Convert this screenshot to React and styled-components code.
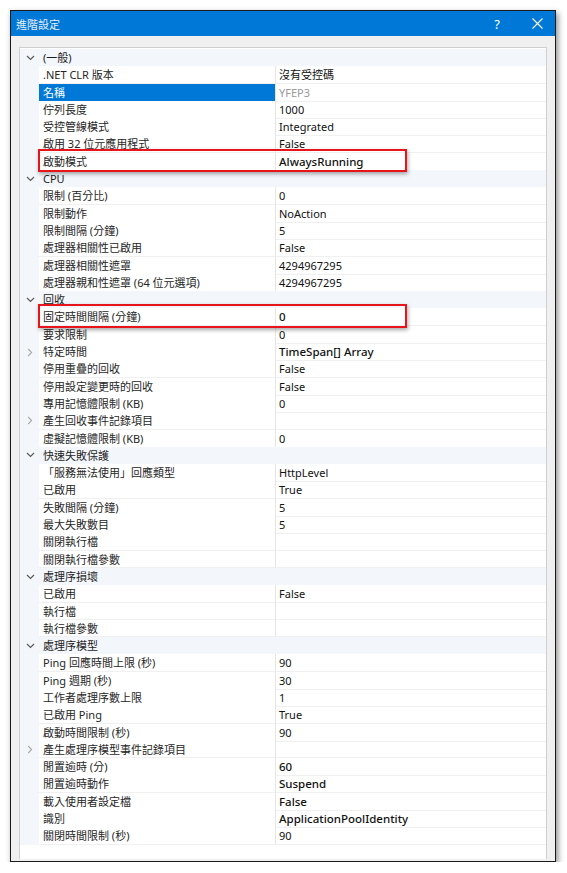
import React from "react";
import styled, { createGlobalStyle } from "styled-components";

const rows = [
  { cat: "(一般)" },
  { name: ".NET CLR 版本", value: "沒有受控碼" },
  { name: "名稱", value: "YFEP3", selected: true },
  { name: "佇列長度", value: "1000" },
  { name: "受控管線模式", value: "Integrated" },
  { name: "啟用 32 位元應用程式", value: "False" },
  { name: "啟動模式", value: "AlwaysRunning", bold: true, mark: true },
  { cat: "CPU" },
  { name: "限制 (百分比)", value: "0" },
  { name: "限制動作", value: "NoAction" },
  { name: "限制間隔 (分鐘)", value: "5" },
  { name: "處理器相關性已啟用", value: "False" },
  { name: "處理器相關性遮罩", value: "4294967295" },
  { name: "處理器親和性遮罩 (64 位元選項)", value: "4294967295" },
  { cat: "回收" },
  { name: "固定時間間隔 (分鐘)", value: "0", bold: true, mark: true },
  { name: "要求限制", value: "0" },
  { name: "特定時間", value: "TimeSpan[] Array", bold: true, expand: true },
  { name: "停用重疊的回收", value: "False" },
  { name: "停用設定變更時的回收", value: "False" },
  { name: "專用記憶體限制 (KB)", value: "0" },
  { name: "產生回收事件記錄項目", value: "", expand: true },
  { name: "虛擬記憶體限制 (KB)", value: "0" },
  { cat: "快速失敗保護" },
  { name: "「服務無法使用」回應類型", value: "HttpLevel" },
  { name: "已啟用", value: "True" },
  { name: "失敗間隔 (分鐘)", value: "5" },
  { name: "最大失敗數目", value: "5" },
  { name: "關閉執行檔", value: "" },
  { name: "關閉執行檔參數", value: "" },
  { cat: "處理序損壞" },
  { name: "已啟用", value: "False" },
  { name: "執行檔", value: "" },
  { name: "執行檔參數", value: "" },
  { cat: "處理序模型" },
  { name: "Ping 回應時間上限 (秒)", value: "90" },
  { name: "Ping 週期 (秒)", value: "30" },
  { name: "工作者處理序數上限", value: "1" },
  { name: "已啟用 Ping", value: "True" },
  { name: "啟動時間限制 (秒)", value: "90" },
  { name: "產生處理序模型事件記錄項目", value: "", expand: true },
  { name: "閒置逾時 (分)", value: "60", bold: true },
  { name: "閒置逾時動作", value: "Suspend", bold: true },
  { name: "載入使用者設定檔", value: "False", bold: true },
  { name: "識別", value: "ApplicationPoolIdentity", bold: true },
  { name: "關閉時間限制 (秒)", value: "90" },
];

const App = () => {
  return (
    <>
      <GlobalStyle />
      <Window>
        <TitleBar>
          <Title>進階設定</Title>
          <TitleButtons>
            <Help>?</Help>
            <Close>
              <svg width="11" height="11" viewBox="0 0 11 11">
                <path d="M0.5 0.5 L10.5 10.5 M10.5 0.5 L0.5 10.5" stroke="#fff" strokeWidth="1.1" />
              </svg>
            </Close>
          </TitleButtons>
        </TitleBar>
        <Content>
          <Grid>
            {rows.map((r, i) =>
              r.cat ? (
                <CategoryRow key={i}>
                  <Gutter>
                    <svg width="9" height="6" viewBox="0 0 9 6">
                      <path d="M1 1 L4.5 4.5 L8 1" fill="none" stroke="#5a5a5a" strokeWidth="1.2" />
                    </svg>
                  </Gutter>
                  <CatLabel>{r.cat}</CatLabel>
                </CategoryRow>
              ) : (
                <Row key={i}>
                  <Gutter>
                    {r.expand && (
                      <svg width="6" height="9" viewBox="0 0 6 9">
                        <path d="M1.2 1 L4.6 4.5 L1.2 8" fill="none" stroke="#a8a8a8" strokeWidth="1.1" />
                      </svg>
                    )}
                  </Gutter>
                  <NameCell $selected={r.selected}>{r.name}</NameCell>
                  <ValueCell $bold={r.bold} $muted={r.selected}>
                    {r.value}
                  </ValueCell>
                  {r.mark && <Highlight />}
                </Row>
              )
            )}
          </Grid>
        </Content>
      </Window>
    </>
  );
};

export default App;

const GlobalStyle = createGlobalStyle`
  body {
    margin: 0;
    background: #ffffff;
    font-family: "Noto Sans", "Noto Sans CJK TC", sans-serif;
  }
`;

const Window = styled.div`
  margin: 10px 0 0 10px;
  width: 546px;
  height: 852px;
  box-sizing: border-box;
  border: 1px solid #1a1a1a;
  background: #f0f0f0;
  box-shadow: 2px 3px 6px rgba(0, 0, 0, 0.45);
  display: flex;
  flex-direction: column;
  overflow: hidden;
`;

const TitleBar = styled.div`
  height: 25px;
  flex: none;
  background: #0078d7;
  display: flex;
  align-items: center;
  justify-content: space-between;
  padding: 0 0 0 5px;
`;

const Title = styled.div`
  color: #e6effa;
  font-size: 11px;
  font-family: "Noto Sans CJK TC", sans-serif;
`;

const TitleButtons = styled.div`
  display: flex;
  align-items: center;
  height: 100%;
`;

const Help = styled.div`
  width: 30px;
  text-align: center;
  color: #ffffff;
  font-size: 13px;
  margin-right: 7px;
`;

const Close = styled.div`
  width: 36px;
  display: flex;
  justify-content: center;
  align-items: center;
`;

const Content = styled.div`
  flex: 1;
  padding: 11px 8px 2px 8px;
  display: flex;
  min-height: 0;
`;

const Grid = styled.div`
  flex: 1;
  border: 1px solid #cfcfcf;
  border-bottom: none;
  background: #ffffff;
  display: flex;
  flex-direction: column;
  padding-top: 1px;
`;

const BaseRow = styled.div`
  position: relative;
  display: grid;
  grid-template-columns: 19px 237px 1fr;
  height: 17.3px;
  font-size: 11px;
  line-height: 17px;
  flex: none;
`;

const Row = styled(BaseRow)``;

const CategoryRow = styled(BaseRow)`
  background: #f3f6fb;
  grid-template-columns: 19px 1fr;
`;

const Gutter = styled.div`
  background: #f3f6fb;
  display: flex;
  align-items: center;
  justify-content: center;
  padding-left: 1px;
`;

const CatLabel = styled.div`
  padding-left: 4px;
  color: #1e1e1e;
`;

const NameCell = styled.div`
  padding-left: 4px;
  white-space: nowrap;
  overflow: hidden;
  border-bottom: 1px solid #f0f0f0;
  border-right: 1px solid #e6e6e6;
  box-sizing: border-box;
  background: ${(p) => (p.$selected ? "#0078d7" : "#ffffff")};
  color: ${(p) => (p.$selected ? "#ffffff" : "#262626")};
`;

const ValueCell = styled.div`
  padding-left: 3px;
  white-space: nowrap;
  border-bottom: 1px solid #f0f0f0;
  box-sizing: border-box;
  color: ${(p) => (p.$muted ? "#9a9a9a" : "#111111")};
  font-size: ${(p) => (p.$bold ? "11.5px" : "11px")};
  font-weight: ${(p) => (p.$bold ? 500 : 400)};
`;

const Highlight = styled.div`
  position: absolute;
  z-index: 2;
  top: -4px;
  bottom: -2px;
  left: 18px;
  width: 369px;
  box-sizing: border-box;
  border: 2.5px solid #e8141b;
  box-shadow: 1px 2px 4px rgba(0, 0, 0, 0.35);
  pointer-events: none;
`;
